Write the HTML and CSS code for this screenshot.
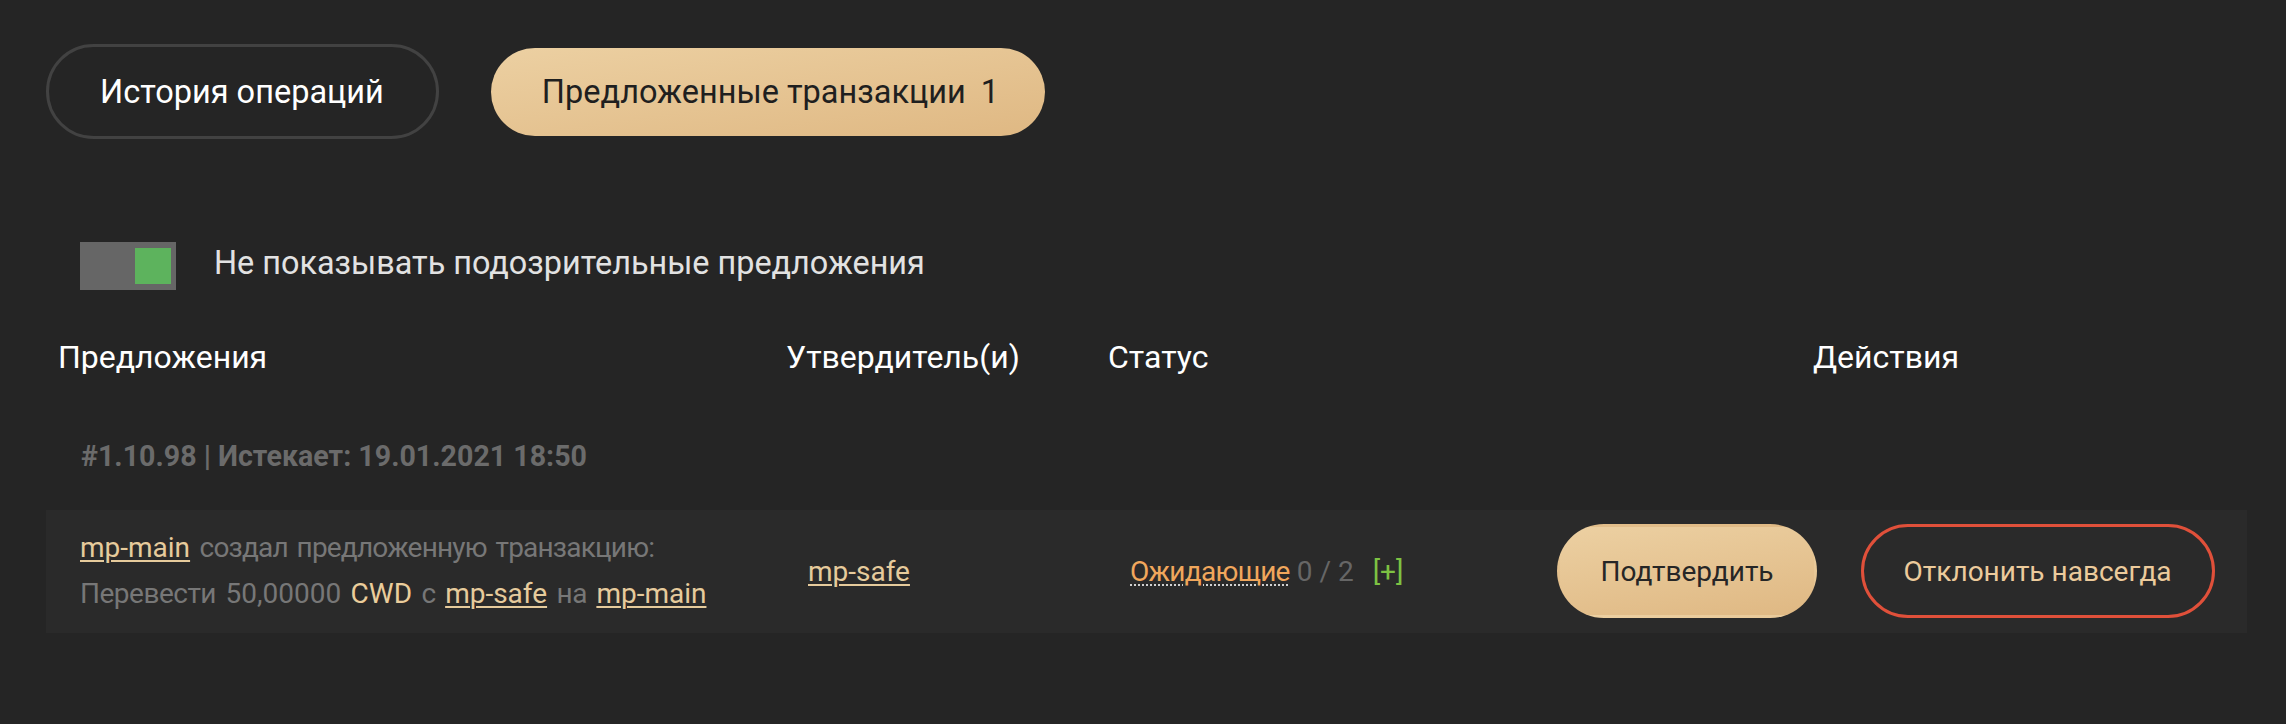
FILE: index.html
```html
<!DOCTYPE html>
<html lang="ru">
<head>
<meta charset="utf-8">
<title>Предложенные транзакции</title>
<link rel="stylesheet" href="styles.css">
</head>
<body>
<div class="page">
  <div class="tabs">
    <button class="tab tab-outline">История операций</button>
    <button class="tab tab-active">Предложенные транзакции <span class="tab-count">1</span></button>
  </div>

  <label class="filter">
    <span class="toggle"><span class="toggle-knob"></span></span>
    <span class="filter-label">Не показывать подозрительные предложения</span>
  </label>

  <div class="grid head">
    <div class="hcell">Предложения</div>
    <div class="hcell">Утвердитель(и)</div>
    <div class="hcell">Статус</div>
    <div class="hcell hcell-center">Действия</div>
  </div>

  <div class="group-title">#1.10.98 | Истекает: 19.01.2021 18:50</div>

  <div class="grid row">
    <div class="cell desc">
      <div><a class="link">mp-main</a> <span class="txt txt-tight">создал предложенную транзакцию:</span></div>
      <div><span class="txt">Перевести</span> 50,00000 <span class="asset">CWD</span> <span class="txt">с</span> <a class="link">mp-safe</a> <span class="txt">на</span> <a class="link">mp-main</a></div>
    </div>
    <div class="cell"><a class="link">mp-safe</a></div>
    <div class="cell status">
      <span class="pending">Ожидающие</span> <span class="count">0 / 2</span><span class="add">[+]</span>
    </div>
    <div class="cell actions">
      <button class="btn btn-approve">Подтвердить</button>
      <button class="btn btn-reject">Отклонить навсегда</button>
    </div>
  </div>
</div>
</body>
</html>
```

FILE: styles.css
```css
* { box-sizing: border-box; }

html, body {
  margin: 0;
  background: #252525;
}

body {
  font-family: Roboto, "Liberation Sans", sans-serif;
  color: #ffffff;
}

.page {
  padding: 44px 39px 0 46px;
}

.tabs {
  display: flex;
  align-items: center;
  gap: 52px;
}

.tab {
  font-family: inherit;
  font-size: 32.5px;
  border-radius: 48px;
  cursor: pointer;
  display: flex;
  align-items: center;
  white-space: nowrap;
}

.tab-outline {
  height: 95px;
  padding: 0 52px 0 51px;
  border: 3px solid #424242;
  background: transparent;
  color: #ffffff;
}

.tab-active {
  height: 88px;
  padding: 0 46px 0 51px;
  border: none;
  background: linear-gradient(172deg, #ecd0a2 0%, #dfb883 100%);
  color: #1f1f1f;
}

.tab-count {
  margin-left: 15px;
}

.filter {
  display: flex;
  align-items: center;
  margin: 103px 0 0 34px;
  gap: 38px;
}

.toggle {
  width: 96px;
  height: 48px;
  background: #666666;
  display: flex;
  align-items: center;
  justify-content: flex-end;
  padding-right: 5px;
}

.toggle-knob {
  width: 36px;
  height: 36px;
  background: #5db35d;
}

.filter-label {
  font-size: 32.4px;
  color: #e2e2e2;
  padding-bottom: 6px;
}

.grid {
  display: grid;
  grid-template-columns: 728px 322px 429px 1fr;
}

.head {
  margin-top: 47px;
}

.hcell {
  font-size: 32px;
  line-height: 40px;
  padding-left: 12px;
  color: #ffffff;
}

.hcell-center {
  padding-left: 0;
  text-align: center;
}

.group-title {
  margin-top: 59px;
  padding-left: 35px;
  font-size: 28.6px;
  line-height: 40px;
  font-weight: 700;
  color: #6b6b6b;
}

.row {
  margin-top: 34px;
  background: #2a2a2a;
  padding: 14px 0 15px;
  align-items: center;
  font-size: 28px;
  color: #777777;
}

.cell {
  padding-left: 34px;
}

.desc {
  line-height: 46px;
  word-spacing: 2.5px;
}

.txt {
  letter-spacing: -0.5px;
}

.txt-tight {
  letter-spacing: -0.8px;
}

.link {
  color: #e6cb9c;
  text-decoration: underline;
  text-decoration-thickness: 2px;
  text-underline-offset: 3px;
  cursor: pointer;
}

.asset {
  color: #eacd9b;
}

.pending {
  color: #f1a75c;
  letter-spacing: -0.7px;
  text-decoration: underline dotted #d0d0d0;
  text-decoration-thickness: 2px;
  text-underline-offset: 4px;
}

.count {
  color: #666666;
}

.add {
  color: #7dc243;
  margin-left: 19px;
}

.actions {
  padding-left: 0;
  display: flex;
  justify-content: center;
  gap: 44px;
}

.btn {
  font-family: inherit;
  font-size: 28px;
  height: 94px;
  padding: 0 40px;
  border: 3px solid transparent;
  border-radius: 47px;
  cursor: pointer;
  white-space: nowrap;
}

.btn-approve {
  background: linear-gradient(172deg, #ecd0a2 0%, #dfb883 100%);
  color: #262626;
}

.btn-reject {
  background: transparent;
  border-color: #e0503a;
  color: #eccb9c;
}
```
